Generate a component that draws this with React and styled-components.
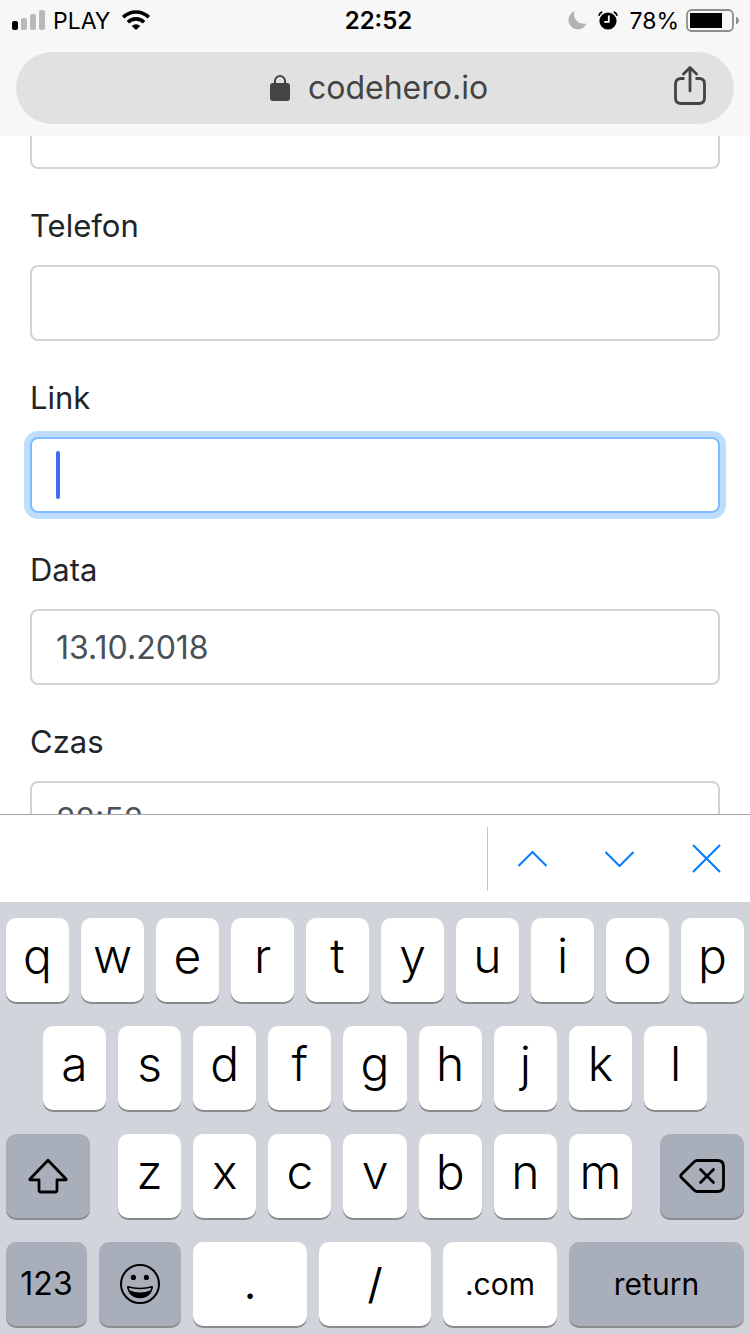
import React from 'react'
import styled, { createGlobalStyle } from 'styled-components'

const topKeys = 'qwertyuiop'.split('')
const homeKeys = 'asdfghjkl'.split('')
const bottomKeys = 'zxcvbnm'.split('')

function StatusBar() {
  return (
    <Status>
      <StatusGroup>
        <svg width="33" height="20" viewBox="0 0 33 20" aria-hidden="true">
          <rect x="0" y="11" width="6" height="9" rx="2" />
          <g fill="#b9b9b9">
            <rect x="9" y="8" width="6" height="12" rx="2" />
            <rect x="18" y="4" width="6" height="16" rx="2" />
            <rect x="27" y="0" width="6" height="20" rx="2" />
          </g>
        </svg>
        <Carrier>PLAY</Carrier>
        <svg width="28" height="20" viewBox="0 0 28 20" aria-hidden="true">
          <g fill="none" stroke="#000" strokeWidth="3.6">
            <path d="M1.2 7.2A18.4 18.4 0 0 1 26.8 7.2" />
            <path d="M5.9 12.2A11.6 11.6 0 0 1 22.1 12.2" />
          </g>
          <path d="M9.8 16A6 6 0 0 1 18.2 16L14 20Z" />
        </svg>
      </StatusGroup>
      <Clock>22:52</Clock>
      <StatusGroup $end>
        <svg width="19" height="19" viewBox="0 0 19 19" aria-hidden="true">
          <path d="M6.5 0.3A9.3 9.3 0 1 0 18.4 12.4A9.6 9.6 0 0 1 6.5 0.3Z" fill="#b2b2b2" />
        </svg>
        <AlarmIcon width="20" height="19" viewBox="0 0 20 19" aria-hidden="true">
          <circle cx="10" cy="10" r="8.6" />
          <path d="M0.8 4.8A6 6 0 0 1 4.2 0.9M19.2 4.8A6 6 0 0 0 15.8 0.9" fill="none" stroke="#000" strokeWidth="1.7" />
          <path d="M10.8 4.5V10.8H6.2" fill="none" stroke="#fff" strokeWidth="1.8" />
        </AlarmIcon>
        <StatusText>78%</StatusText>
        <svg width="53" height="23" viewBox="0 0 53 23" aria-hidden="true">
          <rect x="1" y="1" width="46" height="21" rx="4.5" fill="none" stroke="#8d8d8d" strokeWidth="1.8" />
          <rect x="4" y="4" width="32" height="15" />
          <path d="M50 7.5Q53 9 53 11.5T50 15.5Z" fill="#8d8d8d" />
        </svg>
      </StatusGroup>
    </Status>
  )
}

function Field({ id, label, value, focused }) {
  return (
    <FieldGroup>
      <Label htmlFor={id}>{label}</Label>
      <InputWrap>
        <Input id={id} type="text" defaultValue={value} $focused={focused} />
        {focused && <Caret />}
      </InputWrap>
    </FieldGroup>
  )
}

function Keyboard() {
  return (
    <Keys>
      <KeyRow>
        {topKeys.map((k) => <Key key={k}>{k}</Key>)}
      </KeyRow>
      <KeyRow $inset>
        {homeKeys.map((k) => <Key key={k}>{k}</Key>)}
      </KeyRow>
      <KeyRow $columns="84fr 514fr 84fr" $gap="28px">
        <ActionKey $dark aria-label="shift">
          <svg width="40" height="36" viewBox="0 0 40 36" fill="none" stroke="#000" strokeWidth="2.8" strokeLinejoin="round">
            <path d="M20 2.2L38 21Q38.6 21.8 37.6 21.8H29V32Q29 34 27 34H13Q11 34 11 32V21.8H2.4Q1.4 21.8 2 21Z" />
          </svg>
        </ActionKey>
        <KeyRow>
          {bottomKeys.map((k) => <Key key={k}>{k}</Key>)}
        </KeyRow>
        <ActionKey $dark aria-label="delete">
          <svg width="46" height="34" viewBox="0 0 46 34" fill="none" stroke="#000" strokeWidth="2.8" strokeLinecap="round" strokeLinejoin="round">
            <path d="M18.5 1.5H38.5Q44.5 1.5 44.5 7.5V26.5Q44.5 32.5 38.5 32.5H18.5Q16.5 32.5 15 31L2.4 18.6Q1 17 2.4 15.4L15 3Q16.5 1.5 18.5 1.5Z" />
            <path d="M21.5 10.5L34.5 23.5M34.5 10.5L21.5 23.5" />
          </svg>
        </ActionKey>
      </KeyRow>
      <KeyRow $columns="81fr 82fr 114fr 112fr 114fr 175fr">
        <ActionKey $dark $size="32px">123</ActionKey>
        <ActionKey $dark aria-label="emoji">
          <svg width="40" height="40" viewBox="0 0 40 40">
            <circle cx="20" cy="20" r="19" fill="none" stroke="#000" strokeWidth="2" />
            <circle cx="13.4" cy="13.4" r="2.6" />
            <circle cx="26.4" cy="13.4" r="2.6" />
            <path d="M7.8 22.8Q20 26.2 32.2 22.8C31.6 29.5 26.5 33.4 20 33.4S8.4 29.5 7.8 22.8Z" fill="none" stroke="#000" strokeWidth="1.6" strokeLinejoin="round" />
            <path d="M9 26Q20 31 31 26C29 31 25 33.4 20 33.4S11 31 9 26Z" />
          </svg>
        </ActionKey>
        <ActionKey $size="42px">.</ActionKey>
        <ActionKey $size="42px">/</ActionKey>
        <ActionKey>.com</ActionKey>
        <ActionKey $dark>return</ActionKey>
      </KeyRow>
    </Keys>
  )
}

export default function App() {
  return (
    <Screen>
      <GlobalStyle />
      <Header>
        <StatusBar />
        <AddressBar>
          <Address type="button">
            <svg width="20" height="26" viewBox="0 0 20 26" aria-hidden="true">
              <rect x="0" y="8" width="20" height="18" rx="3" fill="#444" />
              <path d="M4.9 9V6.4A5.1 5.4 0 0 1 15.1 6.4V9" fill="none" stroke="#444" strokeWidth="2" />
            </svg>
            codehero.io
          </Address>
          <ShareButton type="button" aria-label="Share">
            <svg width="32" height="44" viewBox="0 0 32 44" fill="none" stroke="#444" strokeWidth="2.8">
              <path d="M10.5 12.5H7Q1.5 12.5 1.5 18V32Q1.5 37.5 7 37.5H25Q30.5 37.5 30.5 32V18Q30.5 12.5 25 12.5H21.5" />
              <path d="M16 25V2M9.5 8L16 1.6L22.5 8" strokeLinecap="round" strokeLinejoin="round" />
            </svg>
          </ShareButton>
        </AddressBar>
      </Header>
      <Page>
        <Form>
          <FieldGroup>
            <Input type="text" aria-label="Email" />
          </FieldGroup>
          <Field id="phone" label="Telefon" />
          <Field id="link" label="Link" focused />
          <Field id="date" label="Data" value="13.10.2018" />
          <Field id="time" label="Czas" value="22:52" />
        </Form>
      </Page>
      <Accessory>
        <Divider />
        <AccessoryButton type="button" aria-label="Previous field">
          <svg width="29" height="16" viewBox="0 0 29 16"><path d="M0.5 15L14.5 1L28.5 15" /></svg>
        </AccessoryButton>
        <AccessoryButton type="button" aria-label="Next field">
          <svg width="29" height="16" viewBox="0 0 29 16"><path d="M0.5 1L14.5 15L28.5 1" /></svg>
        </AccessoryButton>
        <AccessoryButton type="button" aria-label="Close">
          <svg width="29" height="29" viewBox="0 0 29 29"><path d="M1 1L28 28M28 1L1 28" /></svg>
        </AccessoryButton>
      </Accessory>
      <Keyboard />
    </Screen>
  )
}

const GlobalStyle = createGlobalStyle`
  * {
    box-sizing: border-box;
  }
  body {
    margin: 0;
    background: #fff;
    font-family: Inter, "Liberation Sans", sans-serif;
  }
  button, input {
    font-family: inherit;
    margin: 0;
  }
  svg {
    display: block;
    flex-shrink: 0;
  }
`

const Screen = styled.div`
  display: flex;
  flex-direction: column;
  height: 100vh;
  overflow: hidden;
`

const Header = styled.header`
  flex-shrink: 0;
  padding-bottom: 12px;
  background: #f7f7f7;
`

const Status = styled.div`
  display: grid;
  grid-template-columns: 1fr auto 1fr;
  align-items: center;
  height: 40px;
  margin-bottom: 12px;
  padding: 0 11px 0 12px;
  font-size: 23px;
  line-height: 36px;
  color: #000;
`

const StatusGroup = styled.div`
  display: flex;
  align-items: center;
  gap: ${(p) => (p.$end ? '7px' : '8px')};
  justify-content: ${(p) => (p.$end ? 'flex-end' : 'flex-start')};
`

const StatusText = styled.span`
  padding-top: 2px;
`

const Carrier = styled(StatusText)`
  margin-right: 4px;
`

const Clock = styled.time`
  padding: 2px 0 0 6px;
  font-size: 24px;
  font-weight: 600;
`

const AlarmIcon = styled.svg`
  margin: 0 4px;
`

const AddressBar = styled.div`
  display: grid;
  grid-template-columns: 1fr auto 1fr;
  align-items: center;
  height: 72px;
  margin: 0 16px;
  padding: 0 28px;
  border-radius: 36px;
  background: #e1e1e1;
`

const Address = styled.button`
  grid-column: 2;
  display: flex;
  align-items: center;
  gap: 18px;
  padding: 0 0 0 8px;
  border: 0;
  background: none;
  color: #444;
  font-size: 32px;
  line-height: 48px;
`

const ShareButton = styled.button`
  justify-self: end;
  padding: 0;
  border: 0;
  background: none;
`

const Page = styled.main`
  flex: 1;
  min-height: 0;
  overflow: hidden;
  background: #fff;
`

/* scrolled down so the first field sits under the header */
const Form = styled.form`
  margin-top: -43px;
  padding: 0 30px;
`

const FieldGroup = styled.div`
  margin-bottom: 32px;
`

const Label = styled.label`
  display: block;
  margin-bottom: 14px;
  color: #212529;
  font-size: 31px;
  line-height: 50px;
`

const InputWrap = styled.div`
  position: relative;
`

const Input = styled.input`
  display: block;
  width: 100%;
  height: 76px;
  padding: 12px 24px;
  border: 2px solid ${(p) => (p.$focused ? '#80bdff' : '#ced4da')};
  border-radius: 8px;
  outline: 0;
  background: #fff;
  box-shadow: ${(p) => (p.$focused ? '0 0 0 6px rgba(0, 123, 255, 0.25)' : 'none')};
  color: #495057;
  font-size: 32px;
  line-height: 48px;
`

const Caret = styled.span`
  position: absolute;
  top: 14px;
  left: 26px;
  width: 4px;
  height: 48px;
  border-radius: 2px;
  background: #426bf2;
`

const Accessory = styled.div`
  display: flex;
  flex-shrink: 0;
  align-items: center;
  justify-content: flex-end;
  height: 88px;
  border-top: 1px solid #a5a5a9;
  background: #fff;
`

const Divider = styled.span`
  width: 1px;
  height: 64px;
  margin-right: 1px;
  background: #c4c4c6;
`

const AccessoryButton = styled.button`
  display: flex;
  align-items: center;
  justify-content: center;
  width: 87px;
  height: 64px;
  padding: 0;
  border: 0;
  background: none;
  path {
    fill: none;
    stroke: #007aff;
    stroke-width: 2;
  }
`

const Keys = styled.div`
  display: flex;
  flex-direction: column;
  flex-shrink: 0;
  gap: 24px;
  padding: 16px 6px 8px;
  background: #d1d4da;
`

const KeyRow = styled.div`
  display: grid;
  grid-template-columns: ${(p) => p.$columns || 'none'};
  grid-auto-columns: 1fr;
  grid-auto-flow: column;
  gap: ${(p) => p.$gap || '12px'};
  padding: ${(p) => (p.$inset ? '0 5%' : '0')};
`

const Key = styled.button.attrs({ type: 'button' })`
  display: flex;
  align-items: center;
  justify-content: center;
  min-width: 0;
  height: 84px;
  padding: 0 0 8px;
  border: 0;
  border-radius: 10px;
  background: ${(p) => (p.$dark ? '#a9afba' : '#fff')};
  box-shadow: 0 2px 0 #898b8f;
  color: #000;
  font-size: 48px;
  font-weight: 350;
  line-height: 60px;
`

const ActionKey = styled(Key)`
  padding: 0;
  font-size: ${(p) => p.$size || '30px'};
  font-weight: 400;
`
